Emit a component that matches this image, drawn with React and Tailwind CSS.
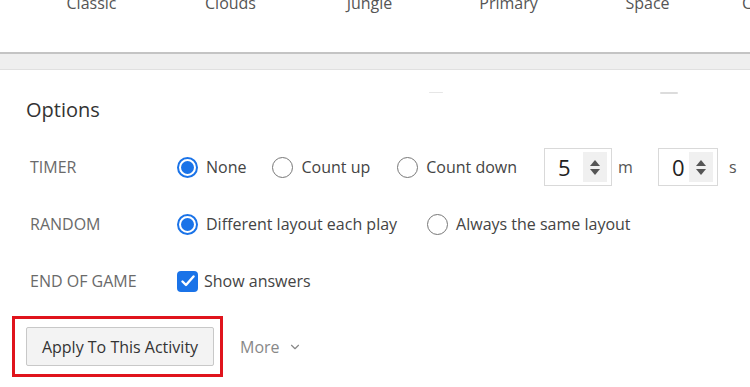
import { ChevronDown } from "lucide-react";

const themes = ["Classic", "Clouds", "Jungle", "Primary", "Space"];

function Radio({ checked, label }) {
  return (
    <label className="flex items-center gap-[8px] text-[16px] text-[#444]">
      {checked ? (
        <span className="w-[21px] h-[21px] rounded-full border-2 border-[#1a73e8] flex items-center justify-center bg-white">
          <span className="w-[13px] h-[13px] rounded-full bg-[#1a73e8]" />
        </span>
      ) : (
        <span className="w-[21px] h-[21px] rounded-full border-[1.5px] border-[#777] bg-white" />
      )}
      <span>{label}</span>
    </label>
  );
}

function NumberBox({ value, width }) {
  return (
    <div
      className={`flex items-center h-[38px] border border-[#d9d9d9] bg-white ${width}`}
    >
      <span className="flex-1 pl-[13px] text-[22px] text-[#222]">{value}</span>
      <span className="w-[24px] h-[30px] mr-[4px] bg-[#f0f0f0] flex flex-col items-center justify-center gap-[3px]">
        <svg width="10" height="6" viewBox="0 0 10 6">
          <path d="M5 0 L10 6 L0 6 Z" fill="#555" />
        </svg>
        <svg width="10" height="6" viewBox="0 0 10 6">
          <path d="M0 0 L10 0 L5 6 Z" fill="#555" />
        </svg>
      </span>
    </div>
  );
}

export default function App() {
  return (
    <div className="relative w-[750px] h-[387px] overflow-hidden bg-white font-['Open_Sans',sans-serif]">
      <div className="h-[52px] flex items-start text-[16px] leading-[22px] text-[#555]">
        <div className="flex pl-[22px] -mt-[8px]">
          {themes.map((t) => (
            <div key={t} className="w-[139px] text-center">
              {t}
            </div>
          ))}
        </div>
        <div className="ml-auto -mt-[8px] w-[8px] overflow-hidden">Colorful</div>
      </div>
      <div className="h-[18px] border-t-2 border-[#c4c4c4] border-b border-b-[#e0e0e0] bg-[#efefef]" />

      {/* faint shadows of the cards above */}
      <div className="absolute left-[429px] top-[92px] w-[14px] h-[1px] rounded-full bg-[#e6e6e6]" />
      <div className="absolute left-[660px] top-[92px] w-[18px] h-[2px] rounded-full bg-[#dcdcdc]" />

      <div className="pl-[26px] pt-[28px]">
        <h2 className="text-[20px] leading-[24px] text-[#333]">Options</h2>

        <div className="mt-[25px] flex flex-col gap-[17px] pl-[4px]">
          <div className="flex items-center h-[40px]">
            <div className="w-[147px] text-[16px] text-[#6a6a6a]">TIMER</div>
            <div className="flex items-center">
              <Radio checked label="None" />
              <div className="ml-[26px]">
                <Radio label="Count up" />
              </div>
              <div className="ml-[27px]">
                <Radio label="Count down" />
              </div>
              <div className="ml-[27px] flex items-center">
                <NumberBox value="5" width="w-[68px]" />
                <span className="ml-[6px] text-[16px] text-[#555]">m</span>
                <div className="ml-[25px]">
                  <NumberBox value="0" width="w-[60px]" />
                </div>
                <span className="ml-[11px] text-[16px] text-[#555]">s</span>
              </div>
            </div>
          </div>

          <div className="flex items-center h-[40px]">
            <div className="w-[147px] text-[16px] text-[#6a6a6a]">RANDOM</div>
            <Radio checked label="Different layout each play" />
            <div className="ml-[30px]">
              <Radio label="Always the same layout" />
            </div>
          </div>

          <div className="flex items-center h-[40px]">
            <div className="w-[147px] text-[16px] text-[#6a6a6a]">END OF GAME</div>
            <label className="flex items-center gap-[6px] text-[16px] text-[#444]">
              <span className="w-[21px] h-[21px] rounded-[4px] bg-[#1a73e8] flex items-center justify-center">
                <svg width="14" height="12" viewBox="0 0 14 12">
                  <path
                    d="M1.5 6.5 L5 10 L12.5 1.5"
                    fill="none"
                    stroke="white"
                    strokeWidth="2.4"
                    strokeLinecap="round"
                    strokeLinejoin="round"
                  />
                </svg>
              </span>
              <span>Show answers</span>
            </label>
          </div>
        </div>
      </div>

      <div className="flex items-center mt-[15px] pl-[12px]">
        <div className="border-[3px] border-[#e0141c] pt-[8px] pb-[8px] pl-[11px] pr-[6px]">
          <button className="h-[39px] w-[188px] bg-[#f3f3f3] border border-[#c8c8c8] rounded-[2px] text-[16px] text-[#333]">
            Apply To This Activity
          </button>
        </div>
        <div className="ml-[17px] flex items-center gap-[8px] text-[16px] text-[#888]">
          <span>More</span>
          <ChevronDown size={14} strokeWidth={2} />
        </div>
      </div>
    </div>
  );
}
